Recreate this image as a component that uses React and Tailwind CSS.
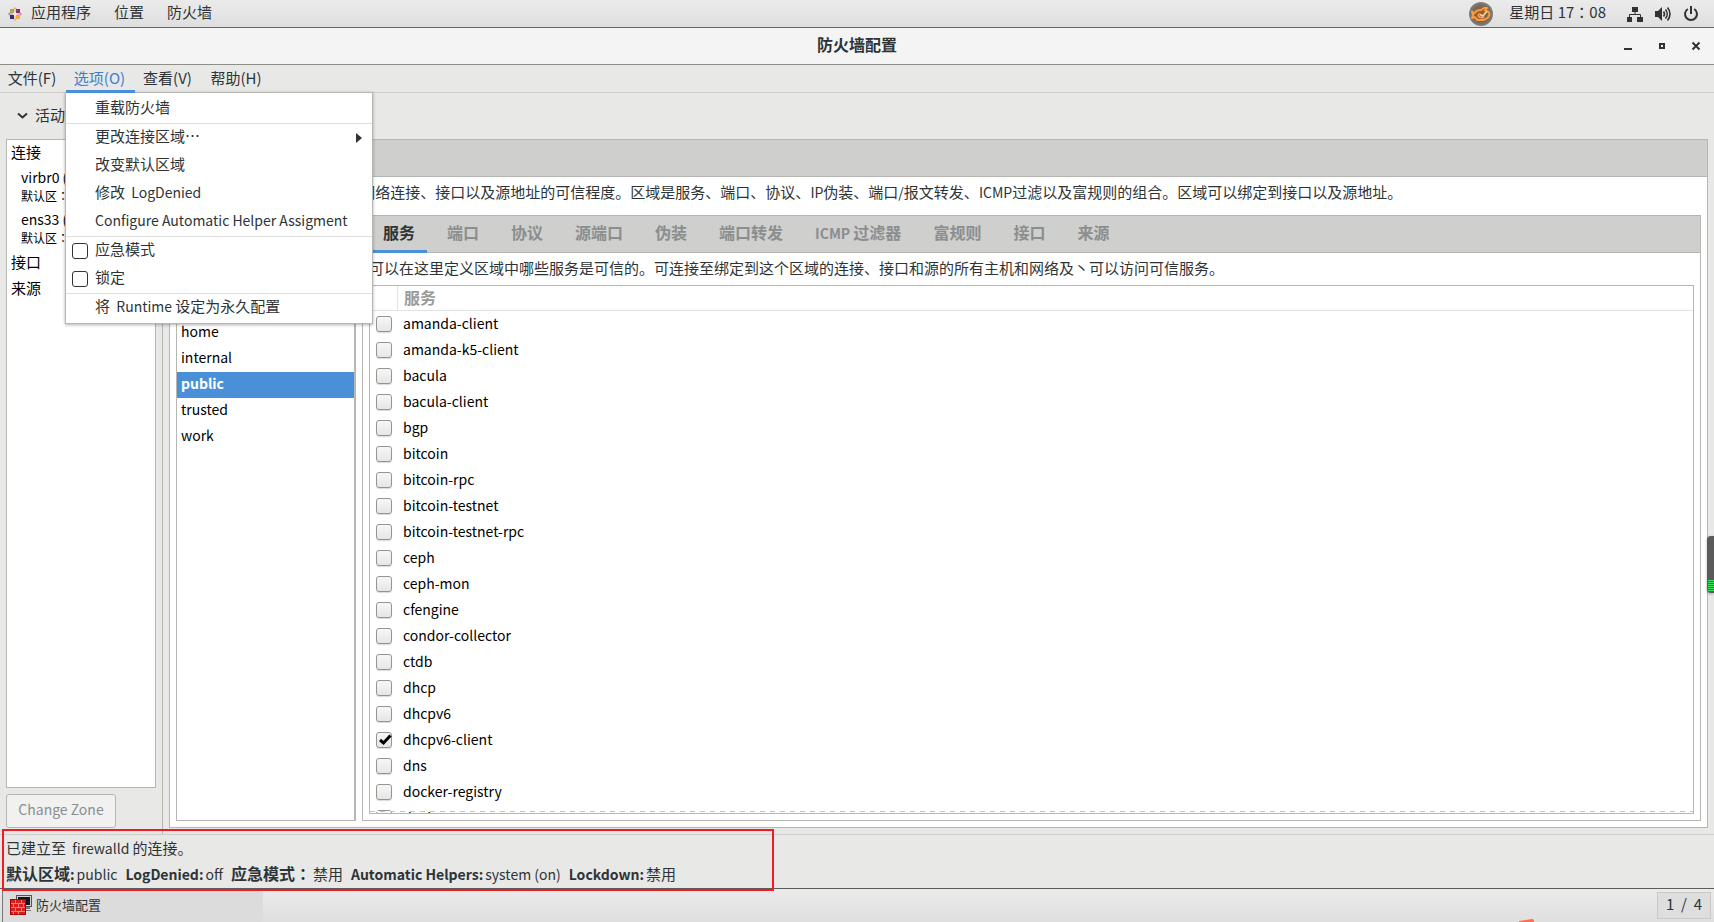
import { useState } from "react";

const ZONES = ["block", "dmz", "drop", "external", "home", "internal", "public", "trusted", "work"];

const TABS = ["服务", "端口", "协议", "源端口", "伪装", "端口转发", "ICMP 过滤器", "富规则", "接口", "来源"];

const SERVICES = [
  "amanda-client",
  "amanda-k5-client",
  "bacula",
  "bacula-client",
  "bgp",
  "bitcoin",
  "bitcoin-rpc",
  "bitcoin-testnet",
  "bitcoin-testnet-rpc",
  "ceph",
  "ceph-mon",
  "cfengine",
  "condor-collector",
  "ctdb",
  "dhcp",
  "dhcpv6",
  "dhcpv6-client",
  "dns",
  "docker-registry",
  "docker-swarm",
];

const STATUS = [
  { label: "默认区域:", value: "public" },
  { label: "LogDenied:", value: "off" },
  { label: "应急模式：", value: "禁用" },
  { label: "Automatic Helpers:", value: "system (on)" },
  { label: "Lockdown:", value: "禁用" },
];

// Latin runs are set a little smaller than the Chinese around them,
// and the full-width colon is centred in its cell.
function Mixed({ text }) {
  return text.split(/([\x20-\x7e]+|：)/).map((part, i) => {
    if (part === "：") {
      return (
        <span key={i} className="font-['Noto_Sans_CJK_TC',sans-serif]">
          {part}
        </span>
      );
    }
    return i % 2 ? (
      <span key={i} className="text-[14px]">
        {part}
      </span>
    ) : (
      part
    );
  });
}

function AppsLogo() {
  return (
    <svg className="h-[14px] w-[14px]" viewBox="0 0 14 14">
      <path d="M7 0l2.500 2.500V5h-5V2.500z" fill="#e3b95a" />
      <path d="M7 14l2.500-2.500V9h-5v2.500z" fill="#e8b65c" />
      <path d="M0 7l2.500-2.500H5v5H2.500z" fill="#b184b0" />
      <path d="M14 7l-2.500-2.500H9v5h2.500z" fill="#d98a98" />
      <path d="M2 2h4v4H2z" fill="#a3ad4a" />
      <path d="M8 2h4v4H8z" fill="#8f2f7f" />
      <path d="M2 8h4v4H2z" fill="#2f2d7c" />
      <path d="M8 8h4v4H8z" fill="#efab3c" />
      <path d="M7 2v10M2 7h10" stroke="#f3e6ee" strokeWidth="1" />
    </svg>
  );
}

function FishIcon() {
  return (
    <svg className="h-6 w-6" viewBox="0 0 24 24">
      <defs>
        <radialGradient id="orb" cx="50%" cy="50%" r="50%">
          <stop offset="0%" stopColor="#a85c1c" />
          <stop offset="60%" stopColor="#7a6350" />
          <stop offset="100%" stopColor="#7f7f7f" />
        </radialGradient>
      </defs>
      <circle cx="12" cy="12" r="12" fill="url(#orb)" />
      <g fill="none" stroke="#ff9a3a" strokeWidth="2" strokeLinejoin="round" strokeLinecap="round">
        <path d="M3 9.500l2.500 2C6.500 9 9 8 12 8l3-2h3l-2 2.500c2.500.5 4.500 2 4.500 4l-1.500 3-4 2.500H8.500L5.500 15 3 16 4 13z" />
        <path d="M10 12c-1.500 2 0 3.500 2 3.500h2.500" />
      </g>
      <path d="M11 12.500l3 1.500 4-5" fill="none" stroke="#ffd9a0" strokeWidth="1.500" />
    </svg>
  );
}

function NetworkIcon() {
  return (
    <svg className="h-4 w-4" viewBox="0 0 16 16" fill="#2e3436">
      <path d="M5 1h6v5H5zM0 11h5v5H0zM10 11h6v5h-6z" />
      <path d="M8 5v3.500M2.500 12V8.500h11V12" fill="none" stroke="#2e3436" />
    </svg>
  );
}

function VolumeIcon() {
  return (
    <svg className="h-4 w-4" viewBox="0 0 16 16" fill="#2e3436">
      <path d="M0 5h3l4-4v14l-4-4H0z" />
      <g fill="none" stroke="#2e3436" strokeWidth="1.600">
        <path d="M8.500 5.500c1.200 1.500 1.200 3.500 0 5" />
        <path d="M10.500 3.500c2.200 2.600 2.200 6.400 0 9" />
        <path d="M12.500 1.500c3.300 3.800 3.300 9.200 0 13" />
      </g>
    </svg>
  );
}

function PowerIcon() {
  return (
    <svg className="h-4 w-4" viewBox="0 0 16 16" fill="none" stroke="#2e3436" strokeWidth="2">
      <path d="M4.800 3a6 6 0 1 0 6.400 0" />
      <path d="M8 0v8" />
    </svg>
  );
}

function FirewallIcon() {
  return (
    <svg className="h-5 w-[22px]" viewBox="0 0 22 20">
      <rect x="6.500" y="0.500" width="15" height="11" fill="#d3d3cf" stroke="#555" />
      <rect x="8" y="2" width="12" height="8" fill="#0f1720" />
      <path d="M15 12h5v2h-5zM15 15h6v1h-6z" fill="#777" />
      <rect x="0.500" y="4.500" width="15" height="15" fill="#d81e1e" stroke="#b00000" />
      <path
        d="M1 8.500h14M1 12.500h14M1 16.500h14M5.500 5v3.500M11.500 5v3.500M3.500 8.500v4M8.500 8.500v4M13.500 8.500v4M5.500 12.500v4M11.500 12.500v4M3.500 16.500v3M8.500 16.500v3"
        fill="none"
        stroke="#f08080"
      />
    </svg>
  );
}

function TopBar() {
  return (
    <header className="flex h-7 shrink-0 items-center justify-between border-b border-[#666666] bg-gradient-to-b from-[#ebebeb] to-[#dfdfdf] pr-[15px] pl-2">
      <nav className="flex items-center gap-[23px] leading-6">
        <button type="button" className="flex items-center gap-[9px]">
          <AppsLogo />
          <span className="pb-[3px]">应用程序</span>
        </button>
        <button type="button" className="pb-[3px]">
          位置
        </button>
        <button type="button" className="pb-[3px]">
          防火墙
        </button>
      </nav>
      <div className="flex items-center">
        <button type="button" aria-label="fish" className="mr-4">
          <FishIcon />
        </button>
        <button type="button" className="mr-[21px] pb-[3px] leading-6">
          星期日 17<span className="font-['Noto_Sans_CJK_TC',sans-serif]">：</span>08
        </button>
        <button type="button" aria-label="系统" className="flex items-center gap-3">
          <NetworkIcon />
          <VolumeIcon />
          <PowerIcon />
        </button>
      </div>
    </header>
  );
}

function TitleBar() {
  return (
    <div className="relative flex h-[37px] shrink-0 items-center justify-center border-b border-[#8f8f8a] bg-[#f4f4f4]">
      <h1 className="pb-[4px] text-[16px] font-bold">防火墙配置</h1>
      <div className="absolute inset-y-0 right-[13px] flex items-center gap-6">
        <button type="button" aria-label="最小化">
          <svg className="h-[10px] w-[10px]" viewBox="0 0 10 10">
            <path d="M1 7h8v2H1z" fill="#2e3436" />
          </svg>
        </button>
        <button type="button" aria-label="最大化">
          <svg className="h-[10px] w-[10px]" viewBox="0 0 10 10">
            <path d="M3 3h4v4H3z" fill="none" stroke="#2e3436" strokeWidth="2" />
          </svg>
        </button>
        <button type="button" aria-label="关闭">
          <svg className="h-[10px] w-[10px]" viewBox="0 0 10 10">
            <path d="M1.500 1.500l7 7M8.500 1.500l-7 7" stroke="#2e3436" strokeWidth="2" />
          </svg>
        </button>
      </div>
    </div>
  );
}

function MenuItem({ text, arrow }) {
  return (
    <button
      type="button"
      role="menuitem"
      className="flex h-7 w-full items-center justify-between pr-[10px] pl-[29px] hover:bg-[#f0f0f0]"
    >
      <span className="pb-[3px] whitespace-pre">
        <Mixed text={text} />
      </span>
      {arrow && (
        <svg className="h-[10px] w-[6px]" viewBox="0 0 6 10">
          <path d="M0 0l6 5-6 5z" fill="#2e3436" />
        </svg>
      )}
    </button>
  );
}

function MenuCheck({ children }) {
  return (
    <label className="flex h-7 items-center gap-[7px] pl-[6px]">
      <input
        type="checkbox"
        className="h-4 w-4 appearance-none rounded-[3px] border border-[#2e3436] bg-white checked:bg-[#4a90d9]"
      />
      <span className="pb-[3px]">{children}</span>
    </label>
  );
}

function OptionsMenu() {
  return (
    <div
      role="menu"
      className="absolute top-[27px] -left-px z-10 w-[308px] border border-[#b6b6b3] bg-white pt-[2px] pb-px text-[#2e3436] shadow-[0_1px_3px_rgba(0,0,0,0.3)]"
    >
      <MenuItem text="重载防火墙" />
      <hr className="border-[#dfdfdf]" />
      <MenuItem text="更改连接区域⋯" arrow />
      <MenuItem text="改变默认区域" />
      <MenuItem text="修改  LogDenied" />
      <MenuItem text="Configure Automatic Helper Assigment" />
      <hr className="border-[#dfdfdf]" />
      <MenuCheck>应急模式</MenuCheck>
      <MenuCheck>锁定</MenuCheck>
      <hr className="border-[#dfdfdf]" />
      <MenuItem text="将  Runtime 设定为永久配置" />
    </div>
  );
}

function MenuBar() {
  return (
    <nav className="flex h-7 shrink-0 border-b border-[#cdcdcb]">
      <button type="button" className="w-[66px] pr-[2px]">
        文件(F)
      </button>
      <div className="relative">
        <button
          type="button"
          className="relative z-20 h-7 w-[69px] border-b-[3px] border-[#4a90d9] pt-[2px] pr-[2px] text-[#3a80cd]"
        >
          选项(O)
        </button>
        <OptionsMenu />
      </div>
      <button type="button" className="w-[67px] pr-[2px]">
        查看(V)
      </button>
      <button type="button" className="w-[70px] pr-[2px]">
        帮助(H)
      </button>
    </nav>
  );
}

function Binding({ name }) {
  return (
    <div className="pb-1 pl-[10px] whitespace-nowrap">
      <p className="text-[14px] leading-[22px]">{name}</p>
      <p className="text-[12px] leading-4">
        默认区<span className="font-['Noto_Sans_CJK_TC',sans-serif]">：</span>
      </p>
    </div>
  );
}

function Sidebar() {
  return (
    <aside className="flex w-[163px] shrink-0 flex-col border-r border-[#b6b6b3] px-[6px] pb-[6px]">
      <button
        type="button"
        className="flex h-[46px] shrink-0 items-center gap-[7px] pb-[2px] pl-[11px] whitespace-nowrap"
      >
        <svg className="h-[11px] w-[11px]" viewBox="0 0 11 11">
          <path d="M1 3.500l4.500 4 4.500-4" fill="none" stroke="#2e3436" strokeWidth="2" />
        </svg>
        活动的绑定
      </button>
      <div className="min-h-0 flex-1 overflow-hidden border border-[#b6b6b3] bg-white pl-1 text-black">
        <p className="pb-[2px] leading-6">连接</p>
        <Binding name="virbr0 (virbr0)" />
        <Binding name="ens33 (ens33)" />
        <p className="pb-[2px] leading-6">接口</p>
        <p className="pb-[2px] leading-6">来源</p>
      </div>
      <button
        type="button"
        disabled
        className="mt-[6px] h-[34px] w-[110px] shrink-0 rounded-[3px] border border-[#b6b6b3] bg-[#f1f1f0] pb-[3px] text-[14px] text-[#8b8e8f]"
      >
        Change Zone
      </button>
    </aside>
  );
}

function ServiceRow({ name, checked, onToggle }) {
  return (
    <tr className="h-[26px]">
      <td className="w-7 p-0 pl-[6px]">
        <span className="relative block h-4 w-4">
          <input
            id={name}
            type="checkbox"
            checked={checked}
            onChange={onToggle}
            className="block h-4 w-4 appearance-none rounded-[3px] border border-[#949490] bg-gradient-to-b from-[#f7f7f7] to-[#e6e6e4] shadow-[0_1px_1px_rgba(0,0,0,0.15)]"
          />
          {checked && (
            <svg className="pointer-events-none absolute inset-0 h-4 w-4" viewBox="0 0 16 16">
              <path d="M4 8l3.500 3L14.500 3.500" fill="none" stroke="#000" strokeWidth="3" />
            </svg>
          )}
        </span>
      </td>
      <td className="p-0 pb-[2px] pl-[5px] text-[14px] leading-6 text-black">
        <label htmlFor={name}>{name}</label>
      </td>
    </tr>
  );
}

function ServiceTable() {
  const [enabled, setEnabled] = useState(["dhcpv6-client"]);

  const toggle = (name) => {
    setEnabled(enabled.includes(name) ? enabled.filter((s) => s !== name) : [...enabled, name]);
  };

  return (
    <div className="relative min-h-0 flex-1 overflow-hidden border border-[#b6b6b3] bg-white">
      <table className="w-full border-separate border-spacing-0">
        <thead>
          <tr className="h-[25px]">
            <th className="w-7 border-r border-b border-[#e2e2e2] p-0" />
            <th className="border-b border-[#e2e2e2] p-0 pb-[2px] pl-[6px] text-left text-[16px] leading-[22px] font-bold text-[#999b9b]">
              服务
            </th>
          </tr>
        </thead>
        <tbody>
          {SERVICES.map((name) => (
            <ServiceRow key={name} name={name} checked={enabled.includes(name)} onToggle={() => toggle(name)} />
          ))}
        </tbody>
      </table>
      {/* overflow hint */}
      <div className="absolute inset-x-0 bottom-px h-px bg-[repeating-linear-gradient(to_right,#c4c4c4_0px,#c4c4c4_5px,#ffffff_5px,#ffffff_10px)]" />
    </div>
  );
}

function ZonePanel() {
  const [zone, setZone] = useState("public");
  const [tab, setTab] = useState("服务");

  return (
    <main className="flex min-w-0 flex-1 flex-col px-[6px] pt-[46px] pb-[6px]">
      <div className="flex min-h-0 flex-1 flex-col border border-[#b6b6b3] bg-white">
        <div className="h-[37px] shrink-0 border-b border-[#b6b6b3] bg-[#cfcfcd]" />
        <p className="h-[38px] shrink-0 px-[6px] leading-[30px] whitespace-nowrap">
          <Mixed text="FirewallD 区域定义了绑定的网络连接、接口以及源地址的可信程度。区域是服务、端口、协议、IP伪装、端口/报文转发、ICMP过滤以及富规则的组合。区域可以绑定到接口以及源地址。" />
        </p>
        <div className="flex min-h-0 flex-1 gap-[6px] px-[6px] pb-[6px]">
          <ul className="w-[180px] shrink-0 overflow-hidden border border-r-2 border-[#b6b6b3] bg-white text-[14px] text-black">
            {ZONES.map((z) => (
              <li key={z}>
                <button
                  type="button"
                  onClick={() => setZone(z)}
                  className={
                    z === zone
                      ? "block h-[26px] w-full bg-[#4a90d9] px-1 pb-[3px] text-left font-bold text-white"
                      : "block h-[26px] w-full px-1 pb-[3px] text-left"
                  }
                >
                  {z}
                </button>
              </li>
            ))}
          </ul>
          <section className="flex min-w-0 flex-1 flex-col border border-[#b6b6b3]">
            <div role="tablist" className="flex h-[37px] shrink-0 gap-2 border-b border-[#b6b6b3] bg-[#cfcfcd] pl-2">
              {TABS.map((t) => (
                <button
                  key={t}
                  type="button"
                  role="tab"
                  aria-selected={t === tab}
                  onClick={() => setTab(t)}
                  className={
                    t === tab
                      ? "h-[37px] border-b-[3px] border-[#4a90d9] px-3 pb-[2px] text-[16px] font-bold"
                      : "h-[37px] border-b-[3px] border-transparent px-3 pb-[2px] text-[16px] font-bold text-[#8b8e8f]"
                  }
                >
                  <Mixed text={t} />
                </button>
              ))}
            </div>
            <div className="flex min-h-0 flex-1 flex-col px-[6px] pb-[6px]">
              <p className="h-8 shrink-0 leading-[30px] whitespace-nowrap">
                可以在这里定义区域中哪些服务是可信的。可连接至绑定到这个区域的连接、接口和源的所有主机和网络及丶可以访问可信服务。
              </p>
              <ServiceTable />
            </div>
          </section>
        </div>
      </div>
    </main>
  );
}

function StatusBar() {
  return (
    <footer className="relative h-[54px] shrink-0 border-t border-[#cdcdcb] pl-[6px]">
      <p className="leading-[26px] whitespace-pre">
        <Mixed text="已建立至  firewalld 的连接。" />
      </p>
      <p className="flex gap-2 leading-6 whitespace-nowrap">
        {STATUS.map((s) => (
          <span key={s.label} className="flex items-baseline gap-[2px]">
            <b className="text-[16px]">
              <Mixed text={s.label} />
            </b>
            <span>
              <Mixed text={s.value} />
            </span>
          </span>
        ))}
      </p>
      <div className="absolute -top-[6px] left-[2px] z-10 h-[62px] w-[772px] border-2 border-[#f01c24]" />
    </footer>
  );
}

function Taskbar() {
  return (
    <div className="relative flex h-[34px] shrink-0 items-center justify-between overflow-hidden border-t border-[#5c5c5a] bg-gradient-to-b from-[#ebebeb] to-[#dfdfdf] pr-[3px] pl-[2px]">
      <button
        type="button"
        className="flex h-full w-[261px] items-center gap-1 border-l border-[#777777] bg-[#dcdcdc] pb-px pl-[7px] text-[13px]"
      >
        <FirewallIcon />
        防火墙配置
      </button>
      <button
        type="button"
        className="h-[27px] w-[54px] border border-[#c8c8c8] bg-[#dedede] pb-[2px] whitespace-pre"
      >
        {"1  /  4"}
      </button>
      <svg className="absolute right-[180px] bottom-0 h-[3px] w-[15px]" viewBox="0 0 15 3">
        <path d="M0 2l13-2q2 0 2 3H0z" fill="#ff7043" />
      </svg>
    </div>
  );
}

function EdgeMeter() {
  return (
    <div className="absolute top-[536px] right-0 z-30 flex h-[57px] w-[7px] flex-col justify-end rounded-l-[4px] bg-[#5a5a5a] pb-[2px] pl-px shadow-[0_1px_3px_rgba(0,0,0,0.3)]">
      <div className="h-[11px] bg-[repeating-linear-gradient(to_bottom,#3fe060_0px,#3fe060_1px,#4a6b4e_1px,#4a6b4e_2px)]" />
    </div>
  );
}

function App() {
  return (
    <div className="relative flex h-screen flex-col overflow-hidden bg-[#e8e8e6] font-['Noto_Sans_CJK_SC',sans-serif] text-[15px] text-[#2e3436]">
      <TopBar />
      <TitleBar />
      <MenuBar />
      <div className="flex min-h-0 flex-1">
        <Sidebar />
        <ZonePanel />
      </div>
      <StatusBar />
      <Taskbar />
      <EdgeMeter />
    </div>
  );
}

export default App;
